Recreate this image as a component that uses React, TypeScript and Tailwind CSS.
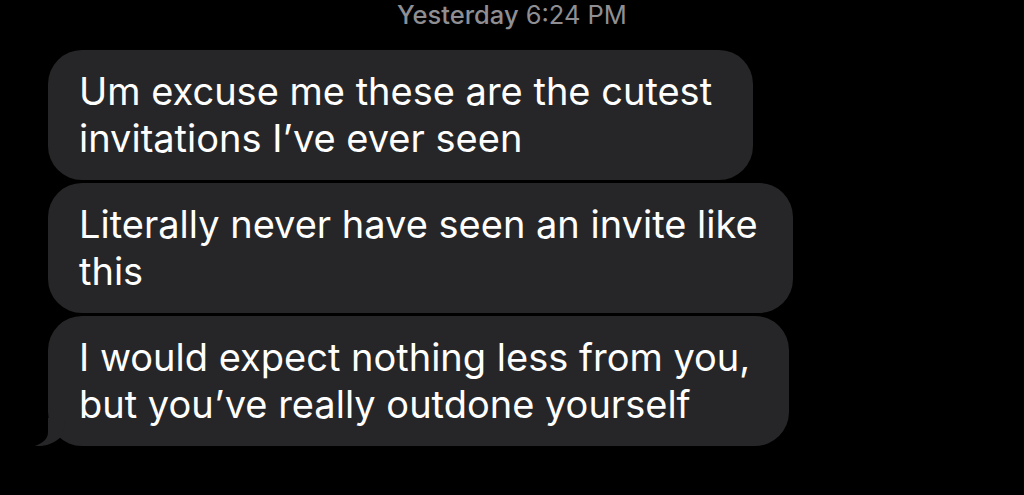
export default function App() {
  const bubbles = [
    {
      text: "Um excuse me these are the cutest invitations I\u2019ve ever seen",
      w: "w-[705px]",
    },
    {
      text: "Literally never have seen an invite like this",
      w: "w-[745px]",
    },
    {
      text: "I would expect nothing less from you, but you\u2019ve really outdone yourself",
      w: "w-[741px]",
    },
  ];

  return (
    <div
      className="h-[495px] w-[1024px] overflow-hidden bg-black"
      style={{ fontFamily: "Inter, 'Noto Sans', sans-serif" }}
    >
      {/* timestamp */}
      <div className="flex justify-center pt-px text-[25.5px] leading-[27px] text-[#8e8e93]">
        <span className="font-medium">Yesterday</span>
        <span className="ml-[7px]">6:24 PM</span>
      </div>

      {/* received messages */}
      <div className="mt-[22px] flex flex-col gap-[3px] pl-[48px]">
        {bubbles.map((b, i) => (
          <div
            key={i}
            className={`relative ${b.w} rounded-[34px] bg-[#262628] py-[18px] pl-[31px] pr-[24px] text-[38px] leading-[47px] text-white`}
          >
            {b.text}
            {i === bubbles.length - 1 && (
              <svg
                className="absolute bottom-0 left-[-14px]"
                width="32"
                height="28"
                viewBox="0 0 32 28"
              >
                <path
                  d="M14 0 L14 14 C14 21 9 25 1 28 C11 29 21 25 28 18 L32 0 Z"
                  fill="#262628"
                />
              </svg>
            )}
          </div>
        ))}
      </div>
    </div>
  );
}
